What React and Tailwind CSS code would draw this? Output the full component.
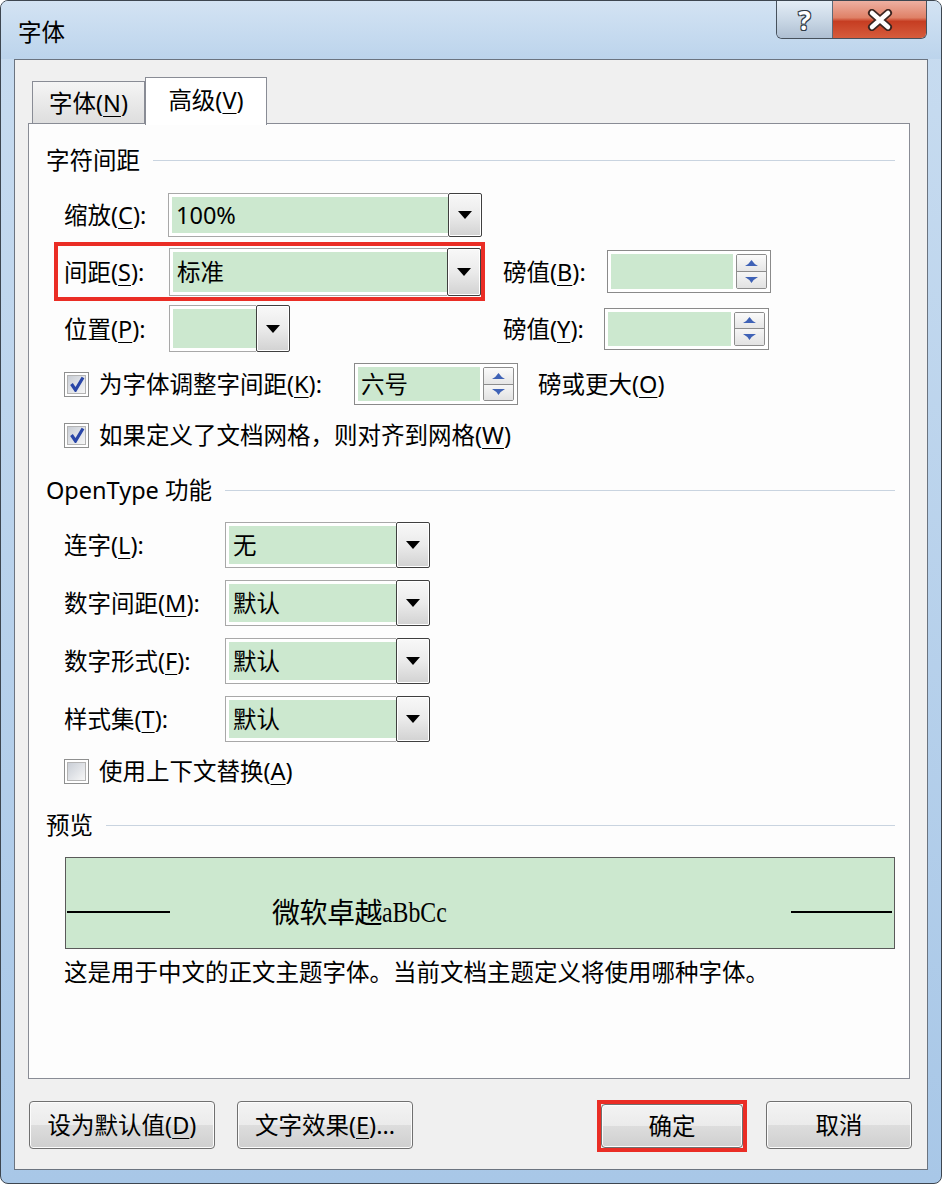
import React from 'react'

const U = ({ c }) => <span className="underline underline-offset-[4px] decoration-1">{c}</span>

function Arrow() {
  return (
    <svg width="14" height="8" viewBox="0 0 14 8">
      <path d="M0 0H14L7 8Z" fill="#000" />
    </svg>
  )
}

function DropBtn() {
  return (
    <div className="w-[34px] h-full shrink-0 flex items-center justify-center border border-[#3f3f3f] rounded-[2px] bg-linear-to-b from-[#f8f8f8] via-[#ebebeb] to-[#d2d2d2] shadow-[inset_0_0_0_1px_#ffffff]">
      <Arrow />
    </div>
  )
}

function Combo({ className, value }) {
  return (
    <div className={`flex ${className}`}>
      <div className="flex-1 flex border-y border-l border-[#a8a8a8] bg-white py-[3px] pl-[3px]">
        <div className="w-full bg-[#cce8cf] flex items-center pl-[4px]">{value}</div>
      </div>
      <DropBtn />
    </div>
  )
}

function UpDown() {
  return (
    <div className="w-[31px] shrink-0 flex flex-col border border-[#8d8d8d] rounded-[2px] overflow-hidden">
      <div className="flex-1 flex items-center justify-center bg-linear-to-b from-[#fbfbfb] to-[#e6e6e6] border-b border-[#8d8d8d]">
        <svg width="13" height="6" viewBox="0 0 13 6">
          <path d="M0 6Q4 4 6.5 0Q9 4 13 6Z" fill="#3f62b6" />
        </svg>
      </div>
      <div className="flex-1 flex items-center justify-center bg-linear-to-b from-[#f6f6f6] to-[#e2e2e2]">
        <svg width="13" height="6" viewBox="0 0 13 6">
          <path d="M0 0Q4 2 6.5 6Q9 2 13 0Z" fill="#3f62b6" />
        </svg>
      </div>
    </div>
  )
}

function Spin({ className, value }) {
  return (
    <div className={`flex gap-[3px] border border-[#8a8a8a] bg-white p-[3px] ${className}`}>
      <div className="flex-1 bg-[#cce8cf] flex items-center pl-[3px]">{value}</div>
      <UpDown />
    </div>
  )
}

function Check({ on }) {
  return (
    <div className="w-[25px] h-[25px] shrink-0 border border-[#8e8f8f] bg-white p-[2px]">
      <div className="w-full h-full bg-linear-to-br from-[#c9ced6] to-[#f7f7f7] border border-[#b4b4b4] flex items-center justify-center">
        {on && (
          <svg width="16" height="16" viewBox="0 0 16 16">
            <path d="M2.5 8L6.5 14L14 1.5" fill="none" stroke="#2946a8" strokeWidth="3.2" />
          </svg>
        )}
      </div>
    </div>
  )
}

function Heading({ children, className }) {
  return (
    <div className={`flex items-center h-[32px] ${className}`}>
      <span>{children}</span>
      <div className="flex-1 h-px bg-[#c9d4e0] ml-[13px]" />
    </div>
  )
}

function WinButton({ children, className }) {
  return (
    <div className={`flex items-center justify-center border border-[#707070] rounded-[4px] shadow-[inset_0_0_0_1px_#fcfcfc] bg-[linear-gradient(to_bottom,#f3f3f3_0%,#ebebeb_50%,#dddddd_50%,#cfcfcf_100%)] ${className}`}>
      {children}
    </div>
  )
}

export default function App() {
  return (
    <div className="w-[942px] h-[1184px] flex flex-col bg-linear-to-b from-[#c8dcf0] to-[#a8c7e7] border border-[#3d4650] rounded-[8px] text-[23.5px] leading-[32px] text-black font-['Noto_Sans','Noto_Sans_CJK_SC',sans-serif] overflow-hidden">
      {/* title bar */}
      <div className="h-[58px] flex items-start shrink-0 bg-linear-to-b from-[#d3e3f3] to-[#bcd4ec]">
        <span className="ml-[17px] mt-[15px]">字体</span>
        <div className="ml-auto mr-[14px] flex h-[38px] border border-t-0 border-[#47515c] rounded-b-[6px] overflow-hidden">
          <div className="w-[56px] flex items-center justify-center bg-linear-to-b from-[#e4edf6] via-[#cad8e6] to-[#aebfd2] border-r border-[#5d6a78]">
            <span className="text-white font-bold text-[26px] leading-none [text-shadow:-1px_-1px_0_#2f3a45,1px_-1px_0_#2f3a45,-1px_1px_0_#2f3a45,1px_1px_0_#2f3a45]">?</span>
          </div>
          <div className="w-[93px] flex items-center justify-center bg-[linear-gradient(to_bottom,#eeb0a2_0%,#df8167_45%,#c63d22_55%,#d65c3c_100%)]">
            <svg width="28" height="22" viewBox="0 0 28 22">
              <path d="M6 4L22 18M22 4L6 18" stroke="#3b2520" strokeWidth="8" strokeLinecap="round" />
              <path d="M6 4L22 18M22 4L6 18" stroke="#ffffff" strokeWidth="4.5" strokeLinecap="round" />
            </svg>
          </div>
        </div>
      </div>

      {/* client area */}
      <div className="mx-[13px] h-[1111px] shrink-0 border border-[#6b7480] bg-[#f0f0f0] flex flex-col px-[13px] pt-[17px]">
        {/* tabs */}
        <div className="flex items-end h-[46px] pl-[4px] relative z-10">
          <div className="w-[113px] h-[42px] flex items-center justify-center border border-b-0 border-[#898c95] bg-linear-to-b from-[#f5f5f5] to-[#dedede]">
            字体(<U c="N" />)
          </div>
          <div className="w-[122px] h-[48px] -mb-[2px] flex items-start justify-center pt-[6px] border border-b-0 border-[#898c95] bg-white">
            高级(<U c="V" />)
          </div>
        </div>

        {/* tab page */}
        <div className="h-[956px] mr-[4px] border border-[#898c95] bg-[#fdfdfd] flex flex-col pl-[17px] pr-[14px]">
          <Heading className="mt-[20px]">字符间距</Heading>

          <div className="flex items-center h-[44px] mt-[17px] pl-[18px]">
            <span className="w-[104px]">缩放(<U c="C" />):</span>
            <Combo className="w-[314px] h-[44px]" value="100%" />
          </div>

          <div className="flex items-center h-[59px] mt-[5px] pl-[8px]">
            <div className="flex items-center h-[59px] w-[431px] border-4 border-[#ea2d25] pl-[6px]">
              <span className="w-[105px]">间距(<U c="S" />):</span>
              <Combo className="w-[312px] h-[48px]" value="标准" />
            </div>
            <span className="w-[104px] ml-[18px]">磅值(<U c="B" />):</span>
            <Spin className="w-[164px] h-[43px]" />
          </div>

          <div className="flex items-center h-[47px] mt-[4px] pl-[18px]">
            <span className="w-[105px]">位置(<U c="P" />):</span>
            <Combo className="w-[121px] h-[47px]" />
            <span className="w-[101px] ml-[213px]">磅值(<U c="Y" />):</span>
            <Spin className="w-[165px] h-[42px]" />
          </div>

          <div className="flex items-center h-[42px] mt-[11px] pl-[18px]">
            <Check on />
            <span className="w-[255px] ml-[10px]">为字体调整字间距(<U c="K" />):</span>
            <Spin className="w-[164px] h-[42px]" value="六号" />
            <span className="ml-[20px]">磅或更大(<U c="O" />)</span>
          </div>

          <div className="flex items-center h-[32px] mt-[14px] pl-[18px]">
            <Check on />
            <span className="ml-[10px]">如果定义了文档网格，则对齐到网格(<U c="W" />)</span>
          </div>

          <Heading className="mt-[23px]">OpenType 功能</Heading>

          <div className="flex items-center h-[46px] mt-[16px] pl-[18px]">
            <span className="w-[161px]">连字(<U c="L" />):</span>
            <Combo className="w-[205px] h-[46px]" value="无" />
          </div>
          <div className="flex items-center h-[46px] mt-[12px] pl-[18px]">
            <span className="w-[161px]">数字间距(<U c="M" />):</span>
            <Combo className="w-[205px] h-[46px]" value="默认" />
          </div>
          <div className="flex items-center h-[46px] mt-[12px] pl-[18px]">
            <span className="w-[161px]">数字形式(<U c="F" />):</span>
            <Combo className="w-[205px] h-[46px]" value="默认" />
          </div>
          <div className="flex items-center h-[46px] mt-[12px] pl-[18px]">
            <span className="w-[161px]">样式集(<U c="T" />):</span>
            <Combo className="w-[205px] h-[46px]" value="默认" />
          </div>

          <div className="flex items-center h-[32px] mt-[13px] pl-[18px]">
            <Check />
            <span className="ml-[10px]">使用上下文替换(<U c="A" />)</span>
          </div>

          <Heading className="mt-[22px]">预览</Heading>

          <div className="ml-[19px] mt-[16px] h-[92px] border border-[#5a5a5a] bg-[#cce8cf] flex items-start">
            <div className="w-[103px] h-[2px] bg-black ml-[1px] mt-[53px]" />
            <div className="ml-[102px] mt-[35px] flex items-end h-[36px] leading-[36px]">
              <span className="text-[28px] tracking-[-0.5px] font-['Noto_Sans_CJK_SC',sans-serif]">微软卓越</span>
              <span className="text-[29px] leading-[34px] font-['Liberation_Serif',serif] scale-x-[0.82] origin-left">aBbCc</span>
            </div>
            <div className="flex-1" />
            <div className="w-[101px] h-[2px] bg-black mr-[2px] mt-[53px]" />
          </div>

          <div className="pl-[18px] mt-[7px] h-[32px] flex items-center">
            这是用于中文的正文主题字体。当前文档主题定义将使用哪种字体。
          </div>
        </div>

        {/* buttons */}
        <div className="flex items-start mt-[22px] pl-[1px] pr-[2px]">
          <WinButton className="w-[186px] h-[48px]">设为默认值(<U c="D" />)</WinButton>
          <WinButton className="w-[176px] h-[48px] ml-[22px]">文字效果(<U c="E" />)...</WinButton>
          <div className="ml-auto -mt-[1px] w-[150px] h-[52px] border-4 border-[#ea2d25]">
            <WinButton className="w-full h-full">确定</WinButton>
          </div>
          <WinButton className="w-[146px] h-[48px] ml-[19px]">取消</WinButton>
        </div>
      </div>
    </div>
  )
}
